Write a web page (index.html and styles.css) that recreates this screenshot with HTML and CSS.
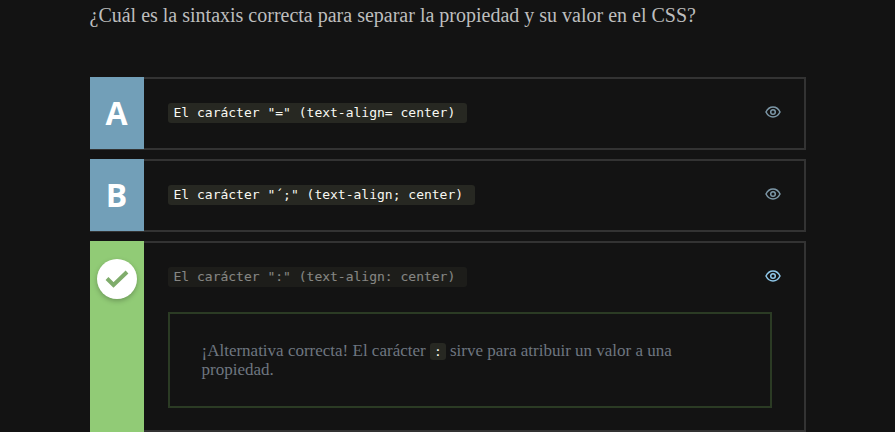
FILE: index.html
```html
<!DOCTYPE html>
<html lang="es">
<head>
<meta charset="utf-8">
<title>Sintaxis CSS</title>
<link rel="stylesheet" href="styles.css">
</head>
<body>
<main class="quiz">
  <h1 class="question">¿Cuál es la sintaxis correcta para separar la propiedad y su valor en el CSS?</h1>
  <ul class="options">
    <li class="option">
      <span class="letter">A</span>
      <div class="body">
        <div class="row">
          <code class="code">El carácter "=" (text-align= center)</code>
          <button class="eye" type="button" aria-label="Ver explicación"><svg viewBox="0 0 16 12"><path d="M1 6C2.600 2.700 5.100 1 8 1s5.400 1.700 7 5c-1.600 3.300-4.100 5-7 5S2.600 9.300 1 6z"/><circle cx="8" cy="6" r="2.300"/></svg></button>
        </div>
      </div>
    </li>
    <li class="option">
      <span class="letter">B</span>
      <div class="body">
        <div class="row">
          <code class="code">El carácter "´;" (text-align; center)</code>
          <button class="eye" type="button" aria-label="Ver explicación"><svg viewBox="0 0 16 12"><path d="M1 6C2.600 2.700 5.100 1 8 1s5.400 1.700 7 5c-1.600 3.300-4.100 5-7 5S2.600 9.300 1 6z"/><circle cx="8" cy="6" r="2.300"/></svg></button>
        </div>
      </div>
    </li>
    <li class="option correct">
      <span class="letter"><span class="check"><svg viewBox="0 0 24 18"><path d="M2 8.500l6.500 6.500L22 2"/></svg></span></span>
      <div class="body">
        <div class="row">
          <code class="code">El carácter ":" (text-align: center)</code>
          <button class="eye" type="button" aria-label="Ocultar explicación"><svg viewBox="0 0 16 12"><path d="M1 6C2.600 2.700 5.100 1 8 1s5.400 1.700 7 5c-1.600 3.300-4.100 5-7 5S2.600 9.300 1 6z"/><circle cx="8" cy="6" r="2.300"/></svg></button>
        </div>
        <p class="explanation">¡Alternativa correcta! El carácter <code class="code">:</code> sirve para atribuir un valor a una propiedad.</p>
      </div>
    </li>
  </ul>
</main>
</body>
</html>
```
FILE: styles.css
```css
* {
  box-sizing: border-box;
}

html {
  overflow: hidden;
}

body {
  margin: 0;
  background: #131313;
  color: #bebebe;
  font-family: "Source Serif Pro", "Liberation Serif", serif;
}

.quiz {
  width: 80%;
  margin: 0 auto;
}

.question {
  margin: 0 0 48px;
  padding-top: 2px;
  font-size: 20px;
  font-weight: 400;
  line-height: 27px;
}

.options {
  display: flex;
  flex-direction: column;
  gap: 9px;
  margin: 0;
  padding: 0;
  list-style: none;
}

.option {
  display: flex;
  min-height: 73px;
  border: 2px solid #333;
  border-left: 0;
}

.letter {
  display: flex;
  flex: none;
  justify-content: center;
  width: 54px;
  margin: -2px 0 -1px;
  background: #729fb8;
  color: #fff;
  font: 700 32px/72px "Open Sans", sans-serif;
}

.body {
  flex: 1;
  padding: 24px 23px 22px 24px;
}

.row {
  display: flex;
  align-items: flex-start;
  justify-content: space-between;
}

.code {
  padding: 0 12px 0 6px;
  border-radius: 3px;
  background: #272822;
  color: #f8f8f2;
  font: 13px/20px "DejaVu Sans Mono", monospace;
}

.eye {
  width: 16px;
  height: 18px;
  padding: 0;
  border: 0;
  background: none;
  color: #7d98a8;
  line-height: 0;
  cursor: pointer;
}

.eye svg {
  width: 16px;
  height: 12px;
  fill: none;
  stroke: currentColor;
  stroke-width: 1.5;
}

.correct .letter {
  margin-bottom: -2px;
  padding-top: 18px;
  background: #91cb76;
}

.check {
  display: flex;
  align-items: center;
  justify-content: center;
  width: 40px;
  height: 40px;
  border-radius: 50%;
  background: #fff;
  box-shadow: 0 2px 5px rgba(0, 0, 0, 0.25);
}

.check svg {
  width: 24px;
  height: 18px;
  fill: none;
  stroke: #7fac6b;
  stroke-width: 4;
}

.correct .row .code {
  opacity: 0.5;
}

.correct .eye {
  color: #8fc8ea;
}

.explanation {
  margin: 25px 9px 0 0;
  padding: 27px 32px;
  border: 2px solid #2b3b24;
  color: #6e7680;
  font-size: 17px;
  line-height: 19px;
}

.explanation .code {
  padding: 1px 4px;
  line-height: 16px;
}
```
